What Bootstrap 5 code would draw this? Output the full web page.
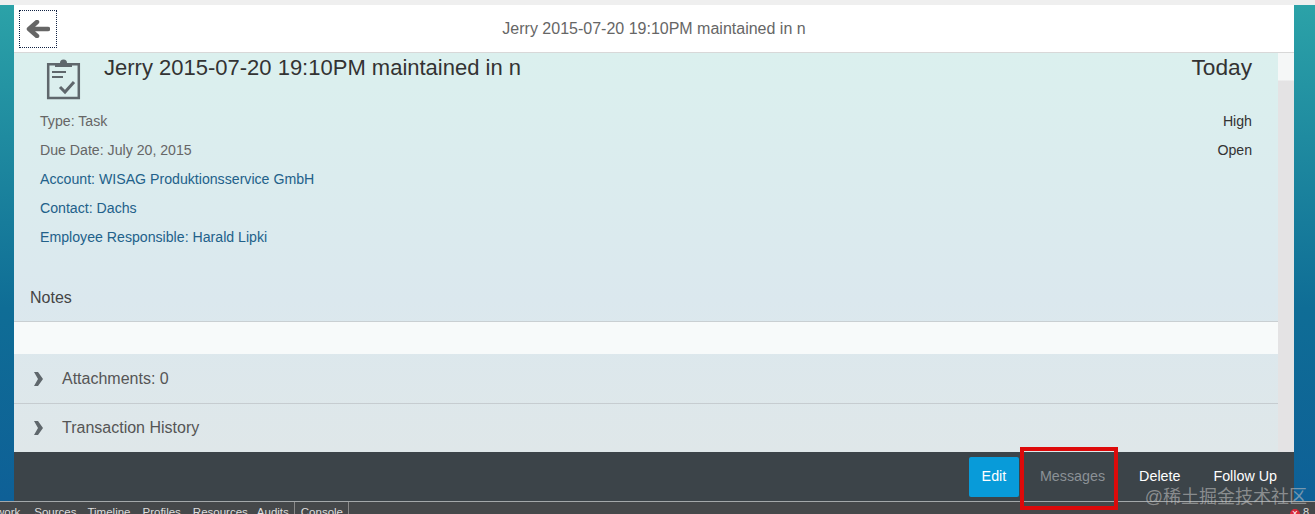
<!DOCTYPE html>
<html lang="en">
<head>
  <meta charset="utf-8">
  <meta name="viewport" content="width=device-width, initial-scale=1">
  <title>Task</title>
  <link href="https://cdn.jsdelivr.net/npm/bootstrap@5.3.2/dist/css/bootstrap.min.css" rel="stylesheet">
  <style>
    html, body { height: 514px; overflow: hidden; }
    body { font-family: "Liberation Sans", Arial, sans-serif; background: linear-gradient(#2ca3a8, #0f6d96 60%, #0e5f97); color: #333; }
    .top-gap { height: 5px; background: #efefef; }
    .app-shell { height: 496px; margin: 0 21px 0 14px; display: flex; flex-direction: column; background: linear-gradient(#f5f7f7 75px, #e4e3e4 76px); }
    .page-head { height: 48px; background: #fff; border-bottom: 1px solid #d8d8d8; color: #666; font-size: 16px; }
    .back-btn { width: 38px; height: 38px; margin: 5px; border: 1px dotted #124; background: none; padding: 0; }
    .head-title { flex: 1; text-align: center; padding-right: 48px; }
    .page-body { flex: 1; display: flex; flex-direction: column; margin-right: 16px; background: linear-gradient(#dbf0ee, #dbe8ee 62%, #dfe7e9); }
    .task-head { padding: 0 26px; height: 54px; }
    .task-icon { width: 38px; margin: 6px 22px 0 4px; }
    .task-title { font-size: 22px; line-height: 28px; color: #333; padding-top: 1px; }
    .task-when { font-size: 22.7px; line-height: 28px; }
    .info-row { padding: 0 26px; font-size: 14.15px; line-height: 29px; color: #666; }
    .info-link { color: #22618a; }
    .info-val { color: #333; }
    .notes-label { margin-top: 31px; padding: 0 16px; height: 39px; line-height: 30px; font-size: 16px; border-bottom: 1px solid #c9cfd2; color: #444; }
    .notes-box { height: 32px; background: #f7fafa; }
    .fold-row { height: 49px; padding: 0 18px; display: flex; align-items: center; font-size: 16px; color: #555; }
    .fold-row + .fold-row { border-top: 1px solid #c6ccd0; }
    .fold-arrow { width: 12px; margin-right: 18px; }
    .foot-bar { height: 49px; background: #3c4449; display: flex; justify-content: flex-end; align-items: center; font-size: 14.3px; color: #fff; }
    .foot-btn { background: none; border: 0; color: #fff; padding: 0; font-size: 14.3px; height: 40px; }
    .foot-edit { width: 50px; background: #089bd9; border-radius: 2px; }
    .foot-msg { color: #8b9196; margin-left: 21px; }
    .foot-del { margin-left: 34px; }
    .foot-fol { margin: 0 17px 0 33px; }
    .hilite { position: absolute; left: 1020px; top: 447px; width: 98px; height: 63px; border: 4px solid #dd0a0a; }
    .dev-bar { height: 13px; background: #45484a; border-top: 1px solid #a4a8aa; font-size: 11.5px; line-height: 21px; color: #ddd; display: flex; gap: 12px; white-space: nowrap; overflow: hidden; }
    .dev-first { margin-left: -4px; margin-right: 2px; }
    .dev-tight { margin-left: -1px; }
    .dev-res { margin-right: -3px; }
    .dev-sep { border-left: 1px solid #8a8a8a; border-right: 1px solid #8a8a8a; padding: 0 5px 0 6px; margin-left: -7px; }
    .watermark { position: absolute; right: 8px; top: 484px; font-size: 18px; color: rgba(190,190,190,.6); font-family: "Liberation Sans", "Noto Sans CJK SC", sans-serif; }
    .err-badge { position: absolute; left: 1290px; top: 509px; width: 10px; height: 10px; border-radius: 50%; background: #d8293a; color: #fff; font-size: 10px; line-height: 9px; text-align: center; }
    .err-num { position: absolute; left: 1303px; top: 504px; font-size: 11px; color: #ddd; }
  </style>
</head>
<body>
  <div class="top-gap"></div>
  <div class="app-shell">
    <header class="page-head d-flex align-items-start">
      <button class="back-btn d-flex align-items-center justify-content-center" aria-label="Back">
        <svg width="24" height="18" viewBox="0 0 24 18"><path d="M22 9H5M11 2L3 9l8 7" fill="none" stroke="#666" stroke-width="4.5" stroke-linejoin="round" stroke-linecap="round"/></svg>
      </button>
      <div class="head-title align-self-center">Jerry 2015-07-20 19:10PM maintained in n</div>
    </header>
    <main class="page-body">
      <div class="task-head d-flex justify-content-between">
        <div class="d-flex">
          <svg class="task-icon" height="42" viewBox="0 0 38 42"><path d="M11 5.2H4.2V39h30.6V5.2H28" fill="none" stroke="#5f676c" stroke-width="2.5"/><path d="M11 8V4h5a3.5 3.5 0 0 1 7 0h5v4z" fill="#5f676c"/><path d="M8 13h14M8 18h11" stroke="#5f676c" stroke-width="1.8"/><path d="M16 28l5 5 9-10" fill="none" stroke="#5f676c" stroke-width="3"/></svg>
          <div class="task-title">Jerry 2015-07-20 19:10PM maintained in n</div>
        </div>
        <div class="task-when">Today</div>
      </div>
      <div class="info-row d-flex justify-content-between"><span>Type: Task</span><span class="info-val">High</span></div>
      <div class="info-row d-flex justify-content-between"><span>Due Date: July 20, 2015</span><span class="info-val">Open</span></div>
      <div class="info-row info-link">Account: WISAG Produktionsservice GmbH</div>
      <div class="info-row info-link">Contact: Dachs</div>
      <div class="info-row info-link">Employee Responsible: Harald Lipki</div>
      <div class="notes-label">Notes</div>
      <div class="notes-box"></div>
      <div class="fold-row"><svg class="fold-arrow" height="14" viewBox="0 0 12 14"><path d="M2 0h4l5 7-5 7H2l4-7z" fill="#5f676c"/></svg>Attachments: 0</div>
      <div class="fold-row"><svg class="fold-arrow" height="14" viewBox="0 0 12 14"><path d="M2 0h4l5 7-5 7H2l4-7z" fill="#5f676c"/></svg>Transaction History</div>
    </main>
    <footer class="foot-bar">
      <button class="foot-btn foot-edit">Edit</button>
      <button class="foot-btn foot-msg">Messages</button>
      <button class="foot-btn foot-del">Delete</button>
      <button class="foot-btn foot-fol">Follow Up</button>
    </footer>
  </div>
  <div class="dev-bar"><span class="dev-first">work</span><span>Sources</span><span class="dev-tight">Timeline</span><span>Profiles</span><span class="dev-res">Resources</span><span>Audits</span><span class="dev-sep">Console</span></div>
  <div class="hilite"></div>
  <div class="watermark">@稀土掘金技术社区</div>
  <div class="err-badge">×</div>
  <div class="err-num">8</div>
</body>
</html>
